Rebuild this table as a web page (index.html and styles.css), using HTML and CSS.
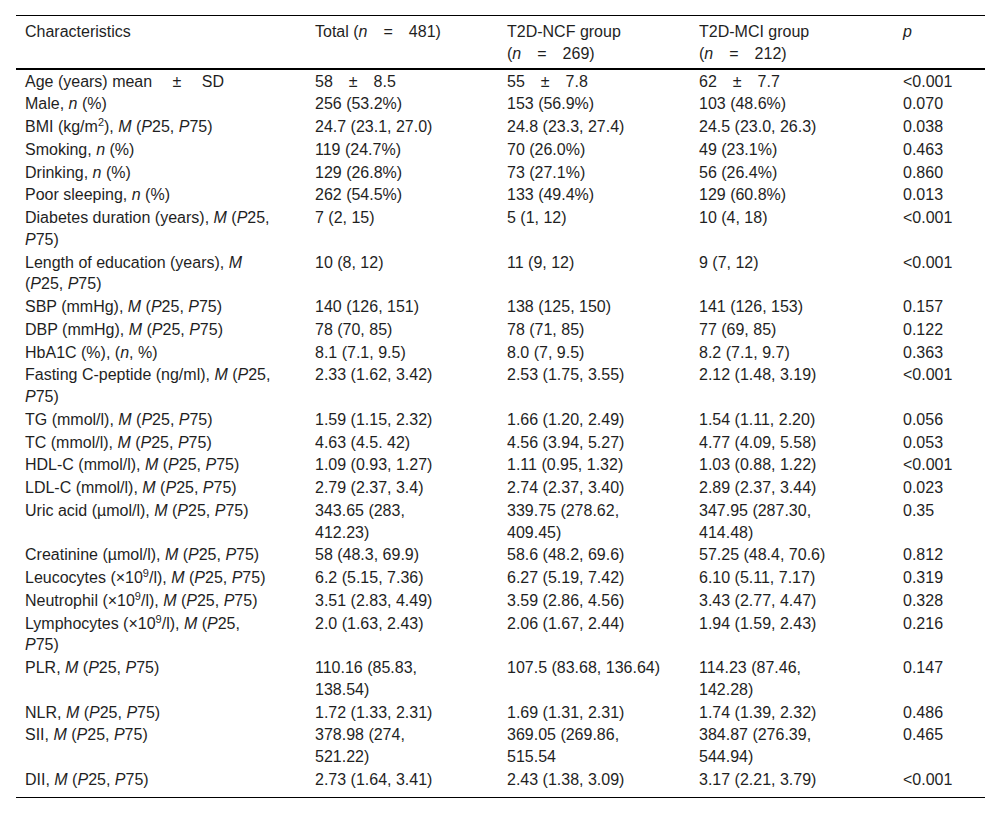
FILE: index.html
```html
<!DOCTYPE html>
<html lang="en">
<head>
<meta charset="utf-8">
<title>Characteristics table</title>
<link rel="stylesheet" href="styles.css">
</head>
<body>
<div class="page">
<table class="data">
<colgroup>
<col class="c1"><col class="c2"><col class="c3"><col class="c4"><col class="c5">
</colgroup>
<thead>
<tr>
<th>Characteristics</th>
<th>Total (<i>n</i>&emsp;=&emsp;481)</th>
<th>T2D-NCF group<br>(<i>n</i>&emsp;=&emsp;269)</th>
<th>T2D-MCI group<br>(<i>n</i>&emsp;=&emsp;212)</th>
<th><i>p</i></th>
</tr>
</thead>
<tbody>
<tr><td>Age (years) mean &emsp;±&emsp; SD</td><td>58&emsp;±&emsp;8.5</td><td>55&emsp;±&emsp;7.8</td><td>62&emsp;±&emsp;7.7</td><td>&lt;0.001</td></tr>
<tr><td>Male, <i>n</i> (%)</td><td>256 (53.2%)</td><td>153 (56.9%)</td><td>103 (48.6%)</td><td>0.070</td></tr>
<tr><td>BMI (kg/m<sup>2</sup>), <i>M</i> (<i>P</i>25, <i>P</i>75)</td><td>24.7 (23.1, 27.0)</td><td>24.8 (23.3, 27.4)</td><td>24.5 (23.0, 26.3)</td><td>0.038</td></tr>
<tr><td>Smoking, <i>n</i> (%)</td><td>119 (24.7%)</td><td>70 (26.0%)</td><td>49 (23.1%)</td><td>0.463</td></tr>
<tr><td>Drinking, <i>n</i> (%)</td><td>129 (26.8%)</td><td>73 (27.1%)</td><td>56 (26.4%)</td><td>0.860</td></tr>
<tr><td>Poor sleeping, <i>n</i> (%)</td><td>262 (54.5%)</td><td>133 (49.4%)</td><td>129 (60.8%)</td><td>0.013</td></tr>
<tr><td>Diabetes duration (years), <i>M</i> (<i>P</i>25, <i>P</i>75)</td><td>7 (2, 15)</td><td>5 (1, 12)</td><td>10 (4, 18)</td><td>&lt;0.001</td></tr>
<tr><td>Length of education (years), <i>M</i> (<i>P</i>25, <i>P</i>75)</td><td>10 (8, 12)</td><td>11 (9, 12)</td><td>9 (7, 12)</td><td>&lt;0.001</td></tr>
<tr><td>SBP (mmHg), <i>M</i> (<i>P</i>25, <i>P</i>75)</td><td>140 (126, 151)</td><td>138 (125, 150)</td><td>141 (126, 153)</td><td>0.157</td></tr>
<tr><td>DBP (mmHg), <i>M</i> (<i>P</i>25, <i>P</i>75)</td><td>78 (70, 85)</td><td>78 (71, 85)</td><td>77 (69, 85)</td><td>0.122</td></tr>
<tr><td>HbA1C (%), (<i>n</i>, %)</td><td>8.1 (7.1, 9.5)</td><td>8.0 (7, 9.5)</td><td>8.2 (7.1, 9.7)</td><td>0.363</td></tr>
<tr><td>Fasting C-peptide (ng/ml), <i>M</i> (<i>P</i>25, <i>P</i>75)</td><td>2.33 (1.62, 3.42)</td><td>2.53 (1.75, 3.55)</td><td>2.12 (1.48, 3.19)</td><td>&lt;0.001</td></tr>
<tr><td>TG (mmol/l), <i>M</i> (<i>P</i>25, <i>P</i>75)</td><td>1.59 (1.15, 2.32)</td><td>1.66 (1.20, 2.49)</td><td>1.54 (1.11, 2.20)</td><td>0.056</td></tr>
<tr><td>TC (mmol/l), <i>M</i> (<i>P</i>25, <i>P</i>75)</td><td>4.63 (4.5. 42)</td><td>4.56 (3.94, 5.27)</td><td>4.77 (4.09, 5.58)</td><td>0.053</td></tr>
<tr><td>HDL-C (mmol/l), <i>M</i> (<i>P</i>25, <i>P</i>75)</td><td>1.09 (0.93, 1.27)</td><td>1.11 (0.95, 1.32)</td><td>1.03 (0.88, 1.22)</td><td>&lt;0.001</td></tr>
<tr><td>LDL-C (mmol/l), <i>M</i> (<i>P</i>25, <i>P</i>75)</td><td>2.79 (2.37, 3.4)</td><td>2.74 (2.37, 3.40)</td><td>2.89 (2.37, 3.44)</td><td>0.023</td></tr>
<tr><td>Uric acid (µmol/l), <i>M</i> (<i>P</i>25, <i>P</i>75)</td><td>343.65 (283, 412.23)</td><td>339.75 (278.62, 409.45)</td><td>347.95 (287.30, 414.48)</td><td>0.35</td></tr>
<tr><td>Creatinine (µmol/l), <i>M</i> (<i>P</i>25, <i>P</i>75)</td><td>58 (48.3, 69.9)</td><td>58.6 (48.2, 69.6)</td><td>57.25 (48.4, 70.6)</td><td>0.812</td></tr>
<tr><td>Leucocytes (×10<sup>9</sup>/l), <i>M</i> (<i>P</i>25, <i>P</i>75)</td><td>6.2 (5.15, 7.36)</td><td>6.27 (5.19, 7.42)</td><td>6.10 (5.11, 7.17)</td><td>0.319</td></tr>
<tr><td>Neutrophil (×10<sup>9</sup>/l), <i>M</i> (<i>P</i>25, <i>P</i>75)</td><td>3.51 (2.83, 4.49)</td><td>3.59 (2.86, 4.56)</td><td>3.43 (2.77, 4.47)</td><td>0.328</td></tr>
<tr><td>Lymphocytes (×10<sup>9</sup>/l), <i>M</i> (<i>P</i>25, <i>P</i>75)</td><td>2.0 (1.63, 2.43)</td><td>2.06 (1.67, 2.44)</td><td>1.94 (1.59, 2.43)</td><td>0.216</td></tr>
<tr><td>PLR, <i>M</i> (<i>P</i>25, <i>P</i>75)</td><td>110.16 (85.83, 138.54)</td><td>107.5 (83.68, 136.64)</td><td>114.23 (87.46, 142.28)</td><td>0.147</td></tr>
<tr><td>NLR, <i>M</i> (<i>P</i>25, <i>P</i>75)</td><td>1.72 (1.33, 2.31)</td><td>1.69 (1.31, 2.31)</td><td>1.74 (1.39, 2.32)</td><td>0.486</td></tr>
<tr><td>SII, <i>M</i> (<i>P</i>25, <i>P</i>75)</td><td>378.98 (274, 521.22)</td><td>369.05 (269.86, 515.54</td><td>384.87 (276.39, 544.94)</td><td>0.465</td></tr>
<tr class="last"><td>DII, <i>M</i> (<i>P</i>25, <i>P</i>75)</td><td>2.73 (1.64, 3.41)</td><td>2.43 (1.38, 3.09)</td><td>3.17 (2.21, 3.79)</td><td>&lt;0.001</td></tr>
</tbody>
</table>
</div>
</body>
</html>
```

FILE: styles.css
```css
html, body {
  margin: 0;
  padding: 0;
  background: #ffffff;
}

.page {
  padding: 15px 15px 0 16px;
}

.data {
  width: 969px;
  table-layout: fixed;
  border-collapse: collapse;
  font-family: "Liberation Sans", Arial, sans-serif;
  font-size: 16px;
  line-height: 21.75px;
  color: #1f1f1f;
  border-top: 1px solid #000;
  border-bottom: 1px solid #000;
}

.c1 { width: 290px; }
.c2 { width: 192px; }
.c3 { width: 192px; }
.c4 { width: 204px; }
.c5 { width: 91px; }

.data th,
.data td {
  text-align: left;
  vertical-align: top;
  font-weight: normal;
  padding: 1px 25px 0 9px;
}

.data th:first-child,
.data td:first-child {
  padding-right: 31px;
}

.data th:nth-child(2),
.data td:nth-child(2) {
  padding-right: 43px;
}

.data th:nth-child(4),
.data td:nth-child(4) {
  padding-right: 37px;
}

.data th:last-child,
.data td:last-child {
  padding-right: 9px;
}

.data thead th {
  padding-top: 5px;
  padding-bottom: 3px;
  border-bottom: 2px solid #000;
}

.data tr.last td {
  padding-bottom: 6px;
}

.data i {
  font-style: italic;
}

.data sup {
  font-size: 11px;
  line-height: 0;
  vertical-align: 6px;
}
```
